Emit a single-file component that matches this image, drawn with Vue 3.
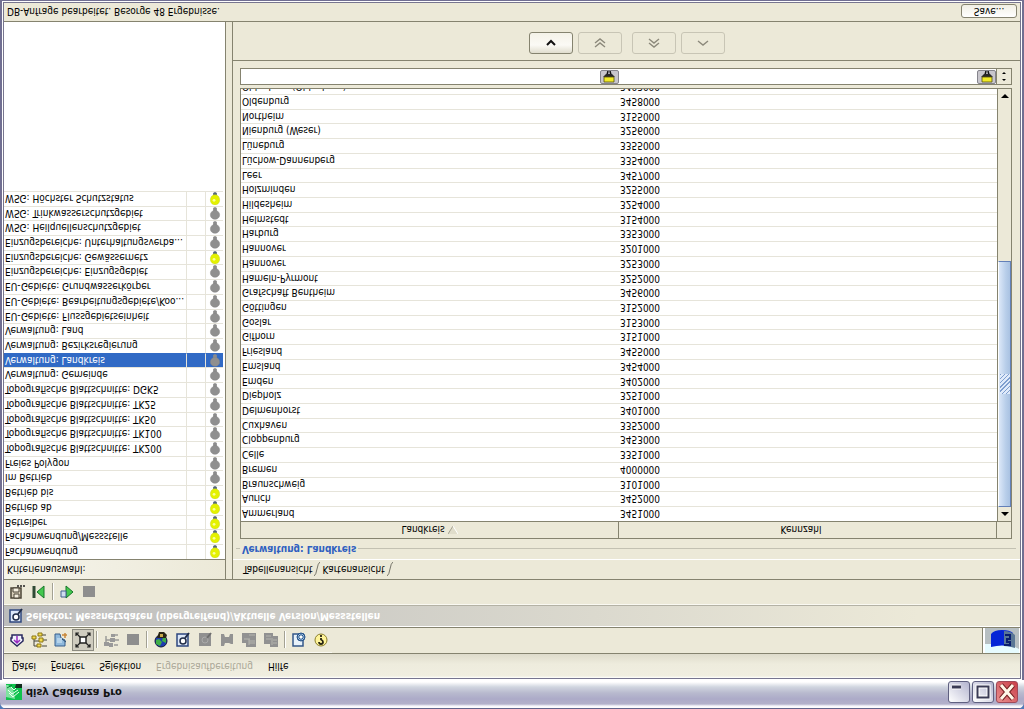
<script setup>
import { ref } from 'vue'

const menus = [
  { pre: '', key: 'D', post: 'atei' },
  { pre: '', key: 'F', post: 'enster' },
  { pre: 'S', key: 'e', post: 'lektion' },
  { pre: 'Ergebnisaufbereitung', key: '', post: '', disabled: true },
  { pre: 'Hilfe', key: '', post: '' }
]

const criteria = [
  ['Fachanwendung', true],
  ['Fachanwendung/Messstelle', true],
  ['Betreiber', true],
  ['Betrieb ab', true],
  ['Betrieb bis', true],
  ['Im Betrieb', false],
  ['Freies Polygon', false],
  ['Topografische Blattschnitte: TK200', false],
  ['Topografische Blattschnitte: TK100', false],
  ['Topografische Blattschnitte: TK50', false],
  ['Topografische Blattschnitte: TK25', false],
  ['Topografische Blattschnitte: DGK5', false],
  ['Verwaltung: Gemeinde', false],
  ['Verwaltung: Landkreis', false],
  ['Verwaltung: Bezirksregierung', false],
  ['Verwaltung: Land', false],
  ['EU-Gebiete: Flussgebietseinheit', false],
  ['EU-Gebiete: Bearbeitungsgebiete/Koo...', false],
  ['EU-Gebiete: Grundwasserkörper', false],
  ['Einzugsbereiche: Einzugsgebiet', false],
  ['Einzugsbereiche: Gewässernetz', true],
  ['Einzugsbereiche: Unterhaltungsverba...', false],
  ['WSG: Heilquellenschutzgebiet', false],
  ['WSG: Trinkwasserschutzgebiet', false],
  ['WSG: Höchster Schutzstatus', true]
]
const selected = ref(13)

const districts = [
  ['Ammerland', '3451000'], ['Aurich', '3452000'], ['Braunschweig', '3101000'],
  ['Bremen', '4000000'], ['Celle', '3351000'], ['Cloppenburg', '3453000'],
  ['Cuxhaven', '3352000'], ['Delmenhorst', '3401000'], ['Diepholz', '3251000'],
  ['Emden', '3402000'], ['Emsland', '3454000'], ['Friesland', '3455000'],
  ['Gifhorn', '3151000'], ['Goslar', '3153000'], ['Göttingen', '3152000'],
  ['Grafschaft Bentheim', '3456000'], ['Hameln-Pyrmont', '3252000'], ['Hannover', '3253000'],
  ['Hannover', '3201000'], ['Harburg', '3353000'], ['Helmstedt', '3154000'],
  ['Hildesheim', '3254000'], ['Holzminden', '3255000'], ['Leer', '3457000'],
  ['Lüchow-Dannenberg', '3354000'], ['Lüneburg', '3355000'], ['Nienburg (Weser)', '3256000'],
  ['Northeim', '3155000'], ['Oldenburg', '3458000'], ['Oldenburg (Oldenburg)', '3403000']
]
</script>

<template>
  <div class="window">
    <header class="titlebar">
      <svg class="appicon" viewBox="0 0 16 16" aria-hidden="true">
        <rect width="16" height="16" fill="#0fc24c" />
        <path d="M0 3L9 1L7 11L2 15H0z" fill="#7fe3a0" />
        <path d="M3 7l4-4 6 5M2 10l4-4 6 4M5 13l3-3 3 3" fill="none" stroke="#eafff0" />
        <path d="M9 12h7v4H10z" fill="#122c1c" />
        <path d="M1 12l5 3" stroke="#0b7a35" />
      </svg>
      <h1>disy Cadenza Pro</h1>
      <div class="winbtns">
        <button aria-label="Minimieren"><svg viewBox="0 0 20 20"><path d="M3 15h9" stroke="#fff" stroke-width="5" /><path d="M3 15h9" stroke="#3a3b55" stroke-width="3" /></svg></button>
        <button aria-label="Maximieren"><svg viewBox="0 0 20 20"><path d="M4.500 4.500h11v11h-11z" fill="none" stroke="#fff" stroke-width="4" /><path d="M4.500 4.500h11v11h-11z" fill="none" stroke="#3a3b55" stroke-width="2" /></svg></button>
        <button class="close" aria-label="Schließen"><svg viewBox="0 0 20 20"><path d="M4 3l12 14M16 3L4 17" stroke="#722" stroke-width="5" /><path d="M4 3l12 14M16 3L4 17" stroke="#fff8e8" stroke-width="3" /></svg></button>
      </div>
    </header>

    <div class="frame">
      <nav class="menubar">
        <button v-for="m in menus" :key="m.pre + m.key" :disabled="m.disabled">{{ m.pre }}<u v-if="m.key">{{ m.key }}</u>{{ m.post }}</button>
      </nav>

      <div class="toolrow">
        <div class="toolbar">
          <button aria-label="Auswahl"><svg viewBox="0 0 16 16"><path d="M3 13V10H2V7l6-5 6 5v3h-1v3z" fill="#f1f3fc" stroke="#28285e" stroke-width="1.500" /><path d="M8 5v7M5 8l3-3 3 3" fill="none" stroke="#9a2cc0" stroke-width="1.500" /></svg></button>
          <button aria-label="Baum"><svg viewBox="0 0 16 16"><path d="M3 2v10M3 2h4M3 7h5M11 2h5M12 8h4M11 13h4" stroke="#44443a" /><path d="M6 1h4v3H6zM8 6h4v4H8zM1 9h4v3H1zM7 12h4v3H7z" fill="#f3dc4c" stroke="#8a7514" /></svg></button>
          <button aria-label="Neu"><svg viewBox="0 0 16 16"><path d="M2 14V2h10v6l-4 2-1 4z" fill="#8fb9dc" stroke="#365f8c" /><path d="M4 5h5v5H4z" fill="#b5d3ea" /><path d="M9 13h5M12 10v5" stroke="#c8873a" stroke-width="1.500" /><path d="M9 9l4-3" stroke="#24486e" /></svg></button>
          <button class="pressed" aria-label="Ausdehnung"><svg viewBox="0 0 16 16"><path d="M5 5h6v6H5z" fill="#fff" stroke="#222" stroke-width="1.500" /><path d="M1 1l4 4M15 1l-4 4M1 15l4-4M15 15l-4-4M1 4V1h3M12 1h3v3M1 12v3h3M12 15h3v-3" fill="none" stroke="#222" stroke-width="1.200" /></svg></button>
          <span class="sep"></span>
          <button disabled aria-label="Baum bearbeiten"><svg viewBox="0 0 16 16"><path d="M3 3v9M3 8h5M11 3h4M12 8h4M9 13h6" stroke="#9b9b98" stroke-width="1.500" /><path d="M6 1h4v4H6zM7 6h5v4H7zM1 2h5v4H1zM8 11h4v3H8z" fill="#999" /></svg></button>
          <button disabled aria-label="Stopp"><svg viewBox="0 0 16 16"><path d="M2 3h12v11H2z" fill="#8e8e8e" /></svg></button>
          <span class="sep"></span>
          <button aria-label="Karte"><svg viewBox="0 0 16 16"><circle cx="8" cy="7" r="6" fill="#1d3bb0" stroke="#101838" /><path d="M3 4l4-2 2 4-3 3-3-1zM9 7l4-2v5l-3 1z" fill="#3fae48" /><path d="M4 10h9l1 3-3 3H6z" fill="#2a2616" /><path d="M7 11h3v3H7z" fill="#c7a94a" /></svg></button>
          <button aria-label="Selektor"><svg viewBox="0 0 16 16"><path d="M2 2h11v12H2z" fill="#dce7f8" stroke="#2e477f" stroke-width="1.500" /><circle cx="8" cy="7" r="3" fill="#fff" stroke="#202c48" stroke-width="1.500" /><path d="M10 10l4 5" stroke="#202c48" stroke-width="2" /></svg></button>
          <button disabled aria-label="Selektor 2"><svg viewBox="0 0 16 16"><path d="M2 2h12v13H2z" fill="#909090" /><circle cx="8" cy="8" r="3" fill="none" stroke="#aaa" /><path d="M10 10l4 5" stroke="#6e6e6e" stroke-width="2" /></svg></button>
          <button disabled aria-label="Verbinden"><svg viewBox="0 0 16 16"><path d="M2 2h3l1 3h4l2-1h2v10h-3l-1-3H6l-1 3H2z" fill="#929292" /></svg></button>
          <button disabled aria-label="Kopieren"><svg viewBox="0 0 16 16"><path d="M1 5h9v10H1zM5 1h10v10H5zM9 9h6v6H9z" fill="#919191" /><path d="M3 9h6M8 3v6M8 5h6M8 7h6M8 13h6" stroke="#b5b5ae" /></svg></button>
          <button disabled aria-label="Tabelle kopieren"><svg viewBox="0 0 16 16"><path d="M1 4h9v11H1zM7 1h8v11H7z" fill="#919191" /><path d="M3 12h5M3 9h5M9 3v7M10 5h4M10 8h4" stroke="#b5b5ae" /></svg></button>
          <span class="sep"></span>
          <button aria-label="Einstellungen"><svg viewBox="0 0 16 16"><path d="M2 2h10v12H2z" fill="#e8f2fa" stroke="#355889" stroke-width="1.500" /><circle cx="10" cy="11" r="4" fill="#9fc1df" stroke="#29548a" /><path d="M10 7v8M6 11h8M7 8l6 6M13 8l-6 6" stroke="#29548a" /><circle cx="10" cy="11" r="1.500" fill="#fff" /></svg></button>
          <button aria-label="Hilfe"><svg viewBox="0 0 16 16"><circle cx="8" cy="8" r="6" fill="#fff49a" stroke="#8b7e2a" /><path d="M6 6q0-2 2-2t2 2q0 1.500-2 2.500V10M8 11v2" fill="none" stroke="#292614" stroke-width="1.800" /></svg></button>
        </div>
        <div class="logo">
          <svg viewBox="0 0 34 25" aria-hidden="true">
            <rect width="34" height="25" fill="#b7bfc2" /><path d="M0 0h34v4L24 9H0z" fill="#e6fbff" />
            <path d="M6 6q11 3 22 0v14q-3 3-11 3T6 19z" fill="#0524d6" /><path d="M19 7q5 0 11-2v13q-4 4-11 4z" fill="#5a7796" />
            <path d="M19 8h6v3h-3v3h3v4h-5" fill="none" stroke="#0a1e6e" stroke-width="2" />
          </svg>
        </div>
      </div>

      <div class="selhead">
        <svg class="ic" viewBox="0 0 16 16" aria-hidden="true"><path d="M2 2h11v12H2z" fill="#dce7f8" stroke="#2e477f" stroke-width="1.500" /><circle cx="8" cy="7" r="3" fill="#fff" stroke="#202c48" stroke-width="1.500" /><path d="M10 10l4 5" stroke="#202c48" stroke-width="2" /></svg>
        <h2>Selektor: Messnetzdaten (übergreifend)/Aktuelle Version/Messstellen</h2>
      </div>

      <div class="toolbar second">
        <button aria-label="Speichern unter"><svg viewBox="0 0 16 16"><path d="M2 2h10v10H2z" fill="#d8cfba" stroke="#4b4436" stroke-width="1.500" /><path d="M5 2h5v4H5zM4 8h6v4H4z" fill="#f5efdf" stroke="#4b4436" /><path d="M8 14h2M11 14h2M14 14h2" stroke="#222" stroke-width="1.500" /></svg></button>
        <button aria-label="Zum Anfang"><svg viewBox="0 0 16 16"><path d="M3 2v12" stroke="#2f4a35" stroke-width="3" /><path d="M13 2v12L6 8z" fill="#44c84f" stroke="#16762a" /></svg></button>
        <span class="sep"></span>
        <button aria-label="Ausführen"><svg viewBox="0 0 16 16"><path d="M7 2v12l7-6z" fill="#44c84f" stroke="#16762a" /><path d="M2 3h5v6H2z" fill="#cfdcee" stroke="#43618f" /></svg></button>
        <button disabled aria-label="Anhalten"><svg viewBox="0 0 16 16"><path d="M2 3h12v11H2z" fill="#8e8e8e" /></svg></button>
      </div>

      <main class="body">
        <section class="left">
          <h3 id="crit">Kriterienauswahl:</h3>
          <div class="list">
            <table aria-labelledby="crit">
              <colgroup><col /><col class="c2" /><col class="c3" /></colgroup>
              <tbody>
                <tr v-for="(c, i) in criteria" :key="i" :class="{ sel: i === selected }" @click="selected = i">
                  <td>{{ c[0] }}</td>
                  <td></td>
                  <td>
                    <svg class="bulb" viewBox="0 0 12 14" aria-hidden="true">
                      <path d="M4 8h4v5l-2 1-2-1z" :fill="c[1] ? '#53667a' : '#8c8c8c'" />
                      <ellipse cx="6" cy="5.500" rx="5" :ry="c[1] ? 5.500 : 4.800" :fill="c[1] ? '#e4f200' : '#8f8f8f'" :stroke="c[1] ? '#c3d020' : '#858585'" stroke-width="0.500" />
                      <circle v-if="c[1]" cx="5" cy="5" r="1.500" fill="#fbff9a" />
                    </svg>
                  </td>
                </tr>
              </tbody>
            </table>
          </div>
        </section>

        <section class="right">
          <div class="tabs" role="tablist">
            <button role="tab" aria-selected="true">Tabellenansicht</button>
            <svg class="slash" viewBox="0 0 6 16" aria-hidden="true"><path d="M0 1q2 1 3 7t3 7" fill="none" stroke="#77756a" /></svg>
            <button role="tab" aria-selected="false">Kartenansicht</button>
            <svg class="slash" viewBox="0 0 6 16" aria-hidden="true"><path d="M0 1q2 1 3 7t3 7" fill="none" stroke="#77756a" /></svg>
          </div>
          <div class="group">
            <div class="legend"><h3>Verwaltung: Landkreis</h3></div>
            <div class="grid">
              <div class="view">
                <table>
                  <thead>
                    <tr>
                      <th>Landkreis <svg class="sort" viewBox="0 0 10 10" aria-hidden="true"><path d="M0 1h10L5 9z" fill="#e0ddcb" /><path d="M0 1l5 8" stroke="#a5a292" /><path d="M10 1L5 9" stroke="#fff" /></svg></th>
                      <th class="unsorted">Kennzahl</th>
                    </tr>
                  </thead>
                  <tbody>
                    <tr v-for="d in districts" :key="d[1]"><td>{{ d[0] }}</td><td>{{ d[1] }}</td></tr>
                  </tbody>
                </table>
              </div>
              <div class="side">
                <div class="corner"></div>
                <button class="sb" aria-label="Nach oben"><svg viewBox="0 0 8 4"><path d="M0 4h8L4 0z" /></svg></button>
                <div class="track"><div class="thumb"><i></i></div></div>
                <button class="sb" aria-label="Nach unten"><svg viewBox="0 0 8 4"><path d="M0 0h8L4 4z" /></svg></button>
              </div>
            </div>
            <div class="filters">
              <div v-for="n in ['Landkreis', 'Kennzahl']" :key="n" class="filter">
                <input type="text" :aria-label="'Filter ' + n" />
                <button :aria-label="'Filter löschen ' + n"><svg viewBox="0 0 12 12"><path d="M4 8l1 4M8 8l-1 4" stroke="#111" stroke-width="1.500" /><path d="M0 6l3 3h6l3-3z" fill="#29282a" /><path d="M1 1h10v5H1z" fill="#f0ea28" stroke="#55510d" stroke-width="0.800" /></svg></button>
              </div>
              <div class="spin">
                <button aria-label="Mehr"><svg viewBox="0 0 4 2"><path d="M0 2h4L2 0z" /></svg></button>
                <button aria-label="Weniger"><svg viewBox="0 0 4 2"><path d="M0 0h4L2 2z" /></svg></button>
              </div>
            </div>
          </div>
          <div class="moves">
            <button class="on" aria-label="Hinzufügen"><svg viewBox="0 0 12 12"><path d="M2 4l4 4 4-4" /></svg></button>
            <button disabled aria-label="Alle hinzufügen"><svg viewBox="0 0 12 12"><path d="M1 2l5 4 5-4M1 6l5 4 5-4" /></svg></button>
            <button class="up" disabled aria-label="Alle entfernen"><svg viewBox="0 0 12 12"><path d="M1 6l5-4 5 4M1 10l5-4 5 4" /></svg></button>
            <button disabled aria-label="Entfernen"><svg viewBox="0 0 12 12"><path d="M1 8l5-4 5 4" /></svg></button>
          </div>
        </section>
      </main>

      <footer class="status">
        <span>DB-Anfrage bearbeitet. Besorge 48 Ergebnisse.</span>
        <button>Save...</button>
      </footer>
    </div>
  </div>
</template>

<style>
body { margin: 0; background: #4f7ab8; overflow: hidden; }
</style>

<style scoped>
* { box-sizing: border-box; }
button { margin: 0; padding: 0; border: 0; background: none; font: inherit; color: inherit; }
svg { display: block; }
h1, h2, h3 { margin: 0; }

/* The whole window is mirrored top to bottom. */
.window {
  height: 100vh;
  display: flex;
  flex-direction: column;
  transform: scaleY(-1);
  font: 10px/14px "DejaVu Sans Condensed", "Liberation Sans", sans-serif;
  color: #000;
  border-radius: 7px 7px 0 0;
  overflow: hidden;
  background: #716f92;
}
.titlebar {
  height: 29px;
  flex: none;
  display: flex;
  align-items: center;
  padding: 4px 6px 0;
  border-top: 1px solid #62638a;
  background: linear-gradient(#fff 0, #f6f6fc 2px, #b3b1ca 4px, #acaac8 9px, #b8b9ce 15px, #d0d5df 21px, #fff 26px);
}
.appicon { width: 16px; height: 16px; }
.titlebar h1 { flex: 1; padding-left: 4px; font: bold 11px/14px "DejaVu Sans Condensed", sans-serif; color: #111; }
.winbtns { display: flex; gap: 2px; }
.winbtns button {
  width: 22px;
  height: 22px;
  border: 1px solid #5f6080;
  border-radius: 3px;
  background: linear-gradient(135deg, #fff, #b3b4cf);
}
.winbtns .close { background: linear-gradient(135deg, #e98e8e, #c93f48); border-color: #a04a58; }

.frame {
  flex: 1;
  min-height: 0;
  display: flex;
  flex-direction: column;
  margin: 0 2px 1px;
  border: 1px solid #fff;
  box-shadow: inset 0 0 0 1px #77758f;
  padding: 1px;
  background: #ece9d8;
}
.menubar {
  height: 25px;
  flex: none;
  display: flex;
  align-items: center;
  gap: 15px;
  padding: 0 8px 0 8px;
  border-bottom: 1px solid #85836f;
  background: linear-gradient(#fff 0, #f0eee0 2px, #eeecdd 14px, #dedbcb);
}
.menubar button:disabled { color: #aaa797; }
.toolrow { height: 26px; flex: none; display: flex; justify-content: space-between; border-bottom: 1px solid #85836f; }
.toolbar { display: flex; align-items: center; padding-left: 2px; border-top: 1px solid #faf9f2; }
.toolbar button { width: 22px; height: 22px; display: grid; place-items: center; }
.toolbar svg, .ic { width: 16px; height: 16px; }
.toolbar .pressed { border: 1px solid #8b8a80; background: #cfccbf; }
.sep { width: 5px; height: 17px; border-left: 1px solid #a3a193; margin-left: 2px; margin-right: -1px; box-shadow: inset 1px 0 #fff; }
.logo { width: 38px; border-left: 1px solid #85836f; padding: 0 1px 0 2px; background: #fff; }
.logo svg { width: 100%; height: 25px; }
.selhead {
  height: 22px;
  flex: none;
  display: flex;
  align-items: center;
  gap: 2px;
  padding-left: 4px;
  border-top: 1px solid #fff;
  border-bottom: 1px solid #b4b2a5;
  background: linear-gradient(90deg, #bcbcbc, #ece9d8 90%);
}
.selhead h2 { font: bold 10px/14px "DejaVu Sans Condensed", sans-serif; color: #fff; }
.second { height: 26px; flex: none; border-bottom: 1px solid #85836f; }

.body { flex: 1; min-height: 0; display: flex; gap: 6px; }
.left { width: 222px; display: flex; flex-direction: column; border-right: 1px solid #85836f; }
.left h3 { height: 19px; padding-left: 3px; font: inherit; line-height: 20px; background: linear-gradient(90deg, #f6f5ec, #ece9d8); }
.list { flex: 1; min-height: 0; overflow: hidden; border-top: 1px solid #85836f; background: #fff; padding-right: 2px; }
table { width: 100%; table-layout: fixed; border-collapse: separate; border-spacing: 0; }
.c2 { width: 19px; }
.c3 { width: 17px; }
td { height: 15px; padding: 0 0 0 1px; line-height: 13px; white-space: nowrap; overflow: hidden; border-bottom: 1px solid #e6e4da; }
tr:nth-child(7n + 3) td, tr:nth-child(7n) td { height: 14px; }
.list td { border-right: 1px solid #e6e4da; }
.list td:last-child { border-right: 0; }
.list .sel td { background: #316ac5; color: #fff; border-bottom-color: #316ac5; }
.bulb { width: 12px; height: 13px; margin-left: 2px; }

.right { flex: 1; min-width: 0; display: flex; flex-direction: column; border-left: 1px solid #85836f; }
.tabs { height: 20px; flex: none; display: flex; align-items: center; padding-left: 10px; border-bottom: 1px solid #fff; }
.slash { width: 6px; height: 16px; margin: 0 2px; }
.group { flex: 1; min-height: 0; display: flex; flex-direction: column; padding: 0 8px 7px 7px; border-bottom: 1px solid #85836f; }
.legend { display: flex; align-items: center; height: 20px; flex: none; margin: 0 -4px; gap: 2px; }
.legend::before, .legend::after { content: ""; height: 1px; background: #c3c1b2; }
.legend::before { width: 4px; }
.legend::after { flex: 1; }
.legend h3 { font: bold 10px/14px "DejaVu Sans Condensed", sans-serif; color: #2f5fc0; }
.grid { flex: 1; min-height: 0; display: flex; border: 1px solid #85836f; border-right: 0; background: #fff; }
.view { flex: 1; min-width: 0; overflow: hidden; }
th { height: 17px; padding: 0; font-weight: normal; line-height: 15px; background: #ece9d8; border-right: 1px solid #85836f; border-bottom: 1px solid #85836f; }
.unsorted { padding-right: 13px; }
.sort { display: inline-block; width: 10px; height: 10px; vertical-align: -1px; }
.side { width: 15px; display: flex; flex-direction: column; border-right: 1px solid #85836f; background: #ece9d8; }
.corner { height: 17px; border-bottom: 1px solid #85836f; }
.sb { height: 14px; display: grid; place-items: center; border-left: 1px solid #85836f; }
.sb svg { width: 8px; height: 4px; }
.track { flex: 1; border-left: 1px solid #85836f; }
.thumb {
  height: 61%;
  display: grid;
  place-items: center;
  border: 1px solid #6380b8;
  border-left-color: #fff;
  background: linear-gradient(90deg, #dce8f8, #b9cfea 60%, #a9c2e2);
}
.thumb i { width: 10px; height: 20px; background: repeating-linear-gradient(45deg, #7f9fcf 0 1px, #dfeafa 1px 3px); }
.filters { height: 17px; flex: none; display: flex; margin-top: 3px; border: 1px solid #85836f; background: #fff; }
.filter { flex: 1; min-width: 0; display: flex; }
.filter input { flex: 1; min-width: 0; border: 0; padding: 0 2px; background: #fff; font: inherit; outline: 0; }
.filter button { width: 19px; height: 14px; display: grid; place-items: center; border: 1px solid #85848c; border-radius: 2px; background: #c8c6cc; }
.filter svg { width: 12px; height: 12px; }
.spin { width: 15px; display: grid; grid-template-rows: 1fr 1fr; border-left: 1px solid #85836f; background: #ece9d8; }
.spin button { display: grid; place-items: center; }
.spin svg { width: 4px; height: 2px; }
.moves { height: 38px; flex: none; display: flex; align-items: center; justify-content: center; gap: 5px; padding-bottom: 4px; }
.moves button { width: 44px; height: 22px; display: grid; place-items: center; border: 1px solid #c8c5b5; border-radius: 3px; }
.moves .up { margin-left: 5px; }
.moves .on { border-color: #85836f; background: linear-gradient(#e0ddce, #fbfaf5 40%, #f4f2e8); }
.moves svg { width: 12px; height: 12px; fill: none; stroke: #8c897b; stroke-width: 1.4; }
.moves .on svg { stroke: #111; stroke-width: 2; }
.status { height: 19px; flex: none; display: flex; align-items: center; justify-content: space-between; padding: 1px 3px 0; border-top: 1px solid #85836f; }
.status button { width: 56px; height: 14px; line-height: 12px; border: 1px solid #85836f; border-radius: 3px; background: linear-gradient(#fff, #f1efe4); }
</style>
